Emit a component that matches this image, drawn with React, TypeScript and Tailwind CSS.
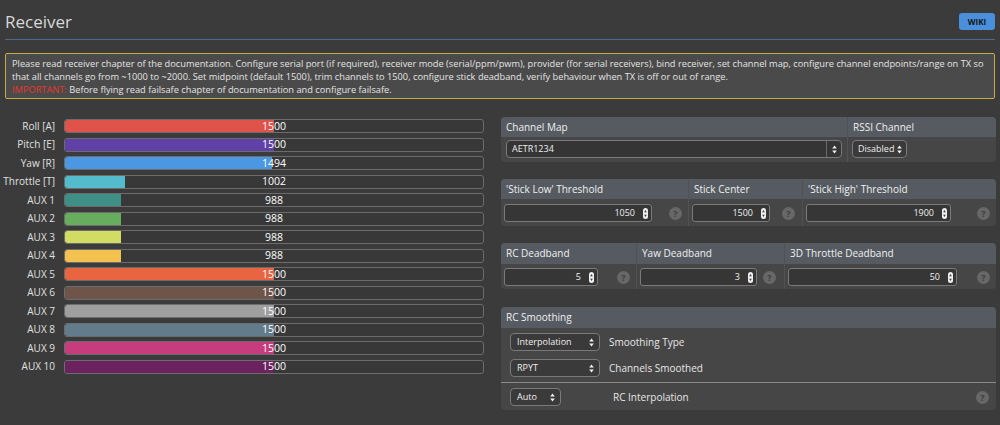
import React from "react"

const channels = [
    { name: "Roll [A]", value: 1500, color: "bg-[#e0534a]" },
    { name: "Pitch [E]", value: 1500, color: "bg-[#6041a8]" },
    { name: "Yaw [R]", value: 1494, color: "bg-[#4a97e3]" },
    { name: "Throttle [T]", value: 1002, color: "bg-[#54bbcc]" },
    { name: "AUX 1", value: 988, color: "bg-[#3e8f86]" },
    { name: "AUX 2", value: 988, color: "bg-[#67ad5e]" },
    { name: "AUX 3", value: 988, color: "bg-[#d3dc62]" },
    { name: "AUX 4", value: 988, color: "bg-[#f3c150]" },
    { name: "AUX 5", value: 1500, color: "bg-[#e96441]" },
    { name: "AUX 6", value: 1500, color: "bg-[#6f544a]" },
    { name: "AUX 7", value: 1500, color: "bg-[#9f9f9f]" },
    { name: "AUX 8", value: 1500, color: "bg-[#637c8b]" },
    { name: "AUX 9", value: 1500, color: "bg-[#c63c7c]" },
    { name: "AUX 10", value: 1500, color: "bg-[#6d2260]" },
]

function SelectArrows() {
    return (
        <svg width="5" height="9" viewBox="0 0 5 9" className="shrink-0">
            <path d="M2.5 0.5 L4.8 3.5 H0.2 Z" fill="#f2f2f2" />
            <path d="M2.5 8.5 L4.8 5.5 H0.2 Z" fill="#f2f2f2" />
        </svg>
    )
}

function Spinner() {
    return (
        <svg width="5" height="11" viewBox="0 0 5 11">
            <rect x="0" y="0" width="5" height="11" rx="2.5" fill="#eeeeee" />
            <path d="M2.5 2 L3.8 4.3 H1.2 Z" fill="#3a3a3a" />
            <path d="M2.5 9 L3.8 6.7 H1.2 Z" fill="#3a3a3a" />
        </svg>
    )
}

function Help() {
    return (
        <span className="flex h-[13px] w-[13px] items-center justify-center rounded-full bg-[#676767] text-[9px] font-bold leading-none text-[#3e3e3e]">
            ?
        </span>
    )
}

function NumInput(props: { value: string; w: string }) {
    return (
        <div className={`flex h-[18px] items-center justify-end gap-[8px] rounded-[3px] border border-[#7a7a7a] bg-[#363636] pr-[3px] text-[9px] text-[#f0f0f0] ${props.w}`}>
            <span>{props.value}</span>
            <Spinner />
        </div>
    )
}

function Select(props: { label: string; w: string }) {
    return (
        <div className={`flex h-[18px] items-center justify-between gap-[3px] rounded-[4px] border border-[#7a7a7a] bg-[#3a3a3a] pl-[6px] pr-[5px] text-[9px] text-[#f0f0f0] ${props.w}`}>
            <span className="whitespace-nowrap">{props.label}</span>
            <SelectArrows />
        </div>
    )
}

function PanelHead(props: { children: React.ReactNode; className?: string }) {
    return (
        <div className={`flex h-[20px] items-center bg-[#565b61] pl-[5px] text-[10px] text-[#f0f0f0] ${props.className ?? ""}`}>
            {props.children}
        </div>
    )
}

export default function App() {
    return (
        <div className="h-[425px] w-[1000px] overflow-hidden bg-[#3a3b3a] font-['Open_Sans',sans-serif] text-[#e2e2e2]">
            {/* header */}
            <div className="mx-[5px] flex h-[40px] items-center justify-between border-b border-[#4c6b8c] pt-[4px]">
                <h1 className="text-[17px] leading-[24px] text-[#d8d8d8]">Receiver</h1>
                <button className="flex h-[17px] w-[36px] items-center justify-center rounded-[3px] bg-[#4a8fdb] text-[8px] font-bold text-[#151515]">
                    WIKI
                </button>
            </div>

            {/* notice */}
            <div className="mx-[5px] mt-[13px] h-[46px] rounded-[2px] border border-[#c6a944] bg-[#4a4a4a] px-[6px] py-[3px] text-[9.25px] leading-[13px] text-[#e4e4e4]">
                <div className="whitespace-nowrap">
                    Please read receiver chapter of the documentation. Configure serial port (if required), receiver mode (serial/ppm/pwm), provider (for serial receivers), bind receiver, set channel map, configure channel endpoints/range on TX so
                </div>
                <div className="whitespace-nowrap">
                    that all channels go from ~1000 to ~2000. Set midpoint (default 1500), trim channels to 1500, configure stick deadband, verify behaviour when TX is off or out of range.
                </div>
                <div className="whitespace-nowrap">
                    <span className="text-[#e8362c]">IMPORTANT:</span> Before flying read failsafe chapter of documentation and configure failsafe.
                </div>
            </div>

            <div className="mt-[18px] flex">
                {/* channel bars */}
                <div className="flex w-[484px] flex-col gap-[4.5px] pt-[2px]">
                    {channels.map((c) => (
                        <div key={c.name} className="flex h-[14px] items-center">
                            <div className="w-[55px] whitespace-nowrap text-right text-[10px] text-[#e0e0e0]">{c.name}</div>
                            <div className="relative ml-[9px] h-[14px] w-[420px] overflow-hidden rounded-[3px] border border-[#6c6c6c] bg-[#383838]">
                                <div
                                    className={`h-full rounded-l-[2px] ${c.color}`}
                                    style={{ width: ((c.value - 800) / 1400) * 418 }}
                                />
                                <div className="absolute inset-0 flex items-center justify-center text-[10.5px] leading-none text-white">
                                    {c.value}
                                </div>
                            </div>
                        </div>
                    ))}
                </div>

                {/* settings */}
                <div className="ml-[17px] flex w-[495px] flex-col">
                    {/* channel map */}
                    <div className="flex h-[45px] overflow-hidden rounded-[4px] bg-[#464646]">
                        <div className="flex w-[346px] flex-col">
                            <PanelHead>Channel Map</PanelHead>
                            <div className="pl-[5px] pt-[3px]">
                                <div className="flex h-[18px] w-[336px] items-center justify-between rounded-[4px] border border-[#7a7a7a] bg-[#353535] pl-[5px] text-[9px] text-[#f0f0f0]">
                                    <span>AETR1234</span>
                                    <div className="flex h-full w-[15px] items-center justify-center border-l border-[#6a6a6a]">
                                        <SelectArrows />
                                    </div>
                                </div>
                            </div>
                        </div>
                        <div className="w-[1px] bg-[#505356]" />
                        <div className="flex flex-1 flex-col">
                            <PanelHead>RSSI Channel</PanelHead>
                            <div className="pl-[4px] pt-[3px]">
                                <div className="flex h-[18px] w-fit items-center gap-[3px] rounded-[4px] border border-[#7a7a7a] bg-[#3a3a3a] pl-[5px] pr-[4px] text-[9px] text-[#f0f0f0]">
                                    <span>Disabled</span>
                                    <SelectArrows />
                                </div>
                            </div>
                        </div>
                    </div>

                    {/* stick thresholds */}
                    <div className="mt-[17px] flex h-[47px] overflow-hidden rounded-[4px] bg-[#464646]">
                        <div className="flex w-[187px] flex-col">
                            <PanelHead>'Stick Low' Threshold</PanelHead>
                            <div className="flex items-center pl-[3px] pt-[5px]">
                                <NumInput value="1050" w="w-[148px]" />
                                <span className="ml-[17px]"><Help /></span>
                            </div>
                        </div>
                        <div className="w-[1px] bg-[#505356]" />
                        <div className="flex w-[113px] flex-col">
                            <PanelHead>Stick Center</PanelHead>
                            <div className="flex items-center pl-[3px] pt-[5px]">
                                <NumInput value="1500" w="w-[78px]" />
                                <span className="ml-[12px]"><Help /></span>
                            </div>
                        </div>
                        <div className="w-[1px] bg-[#505356]" />
                        <div className="flex flex-1 flex-col">
                            <PanelHead>'Stick High' Threshold</PanelHead>
                            <div className="flex items-center pl-[3px] pt-[5px]">
                                <NumInput value="1900" w="w-[145px]" />
                                <span className="ml-[26px]"><Help /></span>
                            </div>
                        </div>
                    </div>

                    {/* deadbands */}
                    <div className="mt-[17px] flex h-[46px] overflow-hidden rounded-[4px] bg-[#464646]">
                        <div className="flex w-[135px] flex-col">
                            <PanelHead className="h-[21px]">RC Deadband</PanelHead>
                            <div className="flex items-center pl-[3px] pt-[4px]">
                                <NumInput value="5" w="w-[94px]" />
                                <span className="ml-[19px]"><Help /></span>
                            </div>
                        </div>
                        <div className="w-[1px] bg-[#505356]" />
                        <div className="flex w-[147px] flex-col">
                            <PanelHead className="h-[21px]">Yaw Deadband</PanelHead>
                            <div className="flex items-center pl-[3px] pt-[4px]">
                                <NumInput value="3" w="w-[117px]" />
                                <span className="ml-[6px]"><Help /></span>
                            </div>
                        </div>
                        <div className="w-[1px] bg-[#505356]" />
                        <div className="flex flex-1 flex-col">
                            <PanelHead className="h-[21px]">3D Throttle Deadband</PanelHead>
                            <div className="flex items-center pl-[3px] pt-[4px]">
                                <NumInput value="50" w="w-[169px]" />
                                <span className="ml-[20px]"><Help /></span>
                            </div>
                        </div>
                    </div>

                    {/* rc smoothing */}
                    <div className="mt-[18px] flex h-[103px] flex-col overflow-hidden rounded-[4px] bg-[#464646]">
                        <PanelHead className="h-[21px]">RC Smoothing</PanelHead>
                        <div className="flex items-center pl-[9px] pt-[5px]">
                            <Select label="Interpolation" w="w-[90px]" />
                            <span className="ml-[9px] text-[10px] text-[#e6e6e6]">Smoothing Type</span>
                        </div>
                        <div className="flex items-center pl-[9px] pt-[8px]">
                            <Select label="RPYT" w="w-[90px]" />
                            <span className="ml-[9px] text-[10px] text-[#e6e6e6]">Channels Smoothed</span>
                        </div>
                        <div className="mt-[5px] flex items-center border-t border-[#8a8a8a] pl-[9px] pr-[7px] pt-[5px]">
                            <Select label="Auto" w="w-[51px]" />
                            <span className="ml-[52px] flex-1 text-[10px] text-[#e6e6e6]">RC Interpolation</span>
                            <Help />
                        </div>
                    </div>
                </div>
            </div>
        </div>
    )
}
